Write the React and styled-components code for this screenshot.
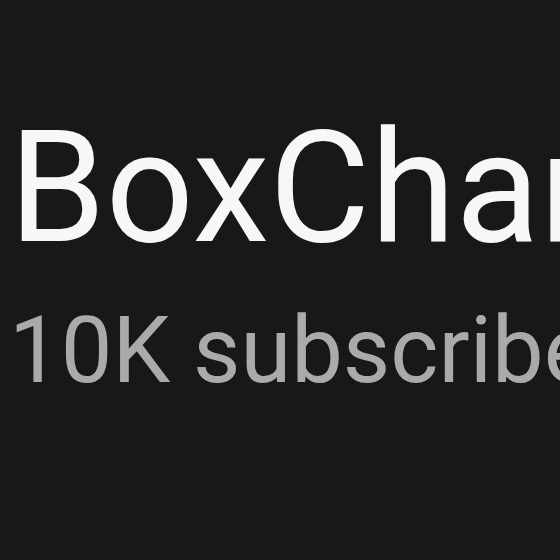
import React from 'react'
import styled, { createGlobalStyle } from 'styled-components'

const GlobalStyle = createGlobalStyle`
	html, body {
		margin: 0;
		padding: 0;
		background: #181818;
	}
	body {
		font-family: Roboto, "Liberation Sans", sans-serif;
	}
`

const HeaderX = styled.div`
	width: 560px;
	height: 560px;
	overflow: hidden;
	box-sizing: border-box;
	padding: 111px 0 0 9px;
	display: flex;
	flex-direction: column;
	gap: 39px;
`

const TitleX = styled.h1`
	margin: 0;
	font-size: 155px;
	font-weight: 400;
	line-height: 1;
	color: #f7f7f7;
	white-space: nowrap;
`

const MetaX = styled.div`
	font-size: 92px;
	line-height: 1;
	color: #aaaaaa;
	white-space: nowrap;
`

const App = () => (
	<>
		<GlobalStyle />
		<HeaderX>
			<TitleX>BoxChannel</TitleX>
			<MetaX>10K subscribers</MetaX>
		</HeaderX>
	</>
)

export default App
